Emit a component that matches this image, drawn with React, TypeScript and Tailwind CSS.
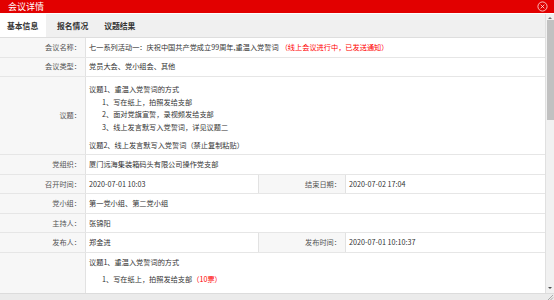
const font = { fontFamily: '"Noto Sans CJK SC", "Noto Sans", sans-serif' };

function Label(props: any) {
  return (
    <div className="w-[86px] shrink-0 bg-[#f7f7f7] border-r border-[#e2e2e2] flex items-center justify-end pr-[4px] text-[#555]">
      {props.children}
    </div>
  );
}

function Row(props: any) {
  return (
    <div className="flex h-[20px] border-b border-[#e6e6e6]">
      <Label>{props.label}</Label>
      <div className="flex-1 flex items-center pl-[3px] text-[#333]">{props.children}</div>
    </div>
  );
}

function SplitRow(props: any) {
  return (
    <div className="flex h-[20px] border-b border-[#e6e6e6]">
      <Label>{props.label}</Label>
      <div className="w-[172px] shrink-0 flex items-center pl-[3px] text-[#333]">{props.value}</div>
      <div className="w-[88px] shrink-0 bg-[#f7f7f7] border-x border-[#e2e2e2] flex items-center justify-end pr-[4px] text-[#555]">
        {props.label2}
      </div>
      <div className="flex-1 flex items-center pl-[3px] text-[#333]">{props.value2}</div>
    </div>
  );
}

export default function App() {
  return (
    <div className="w-[554px] h-[300px] overflow-hidden bg-white flex flex-col text-[7.2px]" style={font}>
      {/* title bar */}
      <div className="h-[14px] shrink-0 bg-[#e20000] flex items-center justify-between pl-[8px] pr-[6px] border-b border-white">
        <span className="text-white text-[9px] leading-none">会议详情</span>
        <svg width="11" height="11" viewBox="0 0 12 12">
          <circle cx="6" cy="6" r="5" fill="none" stroke="#fff" strokeOpacity="0.8" strokeWidth="1" />
          <path d="M4 4 L8 8 M8 4 L4 8" stroke="#fff" strokeOpacity="0.8" strokeWidth="1" />
        </svg>
      </div>
      <div className="flex flex-1 min-h-0">
        <div className="flex-1 min-w-0 flex flex-col overflow-hidden">
          {/* tabs */}
          <div className="h-[24px] shrink-0 bg-[#f0f0f0] border-b border-[#dedede] flex text-[7.8px] font-bold text-[#333]">
            <div className="w-[46px] bg-white flex items-center pl-[7px]">基本信息</div>
            <div className="flex items-center pl-[11px]">报名情况</div>
            <div className="flex items-center pl-[16px]">议题结果</div>
          </div>
          <Row label="会议名称：">
            七一系列活动一：庆祝中国共产党成立99周年,重温入党誓词
            <span className="text-[#f00] ml-[2px]">（线上会议进行中，已发送通知）</span>
          </Row>
          <Row label="会议类型：">党员大会、党小组会、其他</Row>
          <div className="flex h-[80px] border-b border-[#e6e6e6]">
            <Label>议题：</Label>
            <div className="flex-1 pl-[3px] pt-[6px] text-[#333] leading-[12.5px]">
              <div>议题1、重温入党誓词的方式</div>
              <div className="pl-[13px]">1、写在纸上，拍照发给支部</div>
              <div className="pl-[13px]">2、面对党旗宣誓，录视频发给支部</div>
              <div className="pl-[13px]">3、线上发言默写入党誓词，详见议题二</div>
              <div className="mt-[6px]">议题2、线上发言默写入党誓词（禁止复制粘贴）</div>
            </div>
          </div>
          <Row label="党组织：">厦门远海集装箱码头有限公司操作党支部</Row>
          <SplitRow label="召开时间：" value="2020-07-01 10:03" label2="结束日期：" value2="2020-07-02 17:04" />
          <Row label="党小组：">第一党小组、第二党小组</Row>
          <Row label="主持人：">张锦阳</Row>
          <SplitRow label="发布人：" value="郑金进" label2="发布时间：" value2="2020-07-01 10:10:37" />
          <div className="flex h-[40px] shrink-0">
            <Label>{""}</Label>
            <div className="flex-1 pl-[3px] text-[#333]">
              <div className="leading-[18px]">议题1、重温入党誓词的方式</div>
              <div className="pl-[13px] leading-[16px]">
                1、写在纸上，拍照发给支部<span className="text-[#f00]">（10票）</span>
              </div>
            </div>
          </div>
        </div>
        {/* scrollbar */}
        <div className="w-[9px] shrink-0 bg-[#f1f1f1] border-l border-[#e0e0e0] flex flex-col items-center">
          <div className="h-[5px] flex items-end">
            <div className="w-0 h-0 border-x-[2px] border-x-transparent border-b-[2px] border-b-[#707070]" />
          </div>
          <div className="mt-[1px] w-[7px] h-[100px] bg-[#c1c1c1]" />
          <div className="flex-1" />
          <div className="h-[6px] flex items-start">
            <div className="w-0 h-0 border-x-[2px] border-x-transparent border-t-[2px] border-t-[#505050]" />
          </div>
        </div>
      </div>
      {/* bottom bar */}
      <div className="h-[7px] shrink-0 bg-[#ebebeb] border-t border-[#dcdcdc] flex justify-end">
        <svg width="7" height="6" viewBox="0 0 7 6">
          <path d="M6 1 L1 6 M6 3.5 L3.5 6" stroke="#999" strokeWidth="0.8" />
        </svg>
      </div>
    </div>
  );
}
